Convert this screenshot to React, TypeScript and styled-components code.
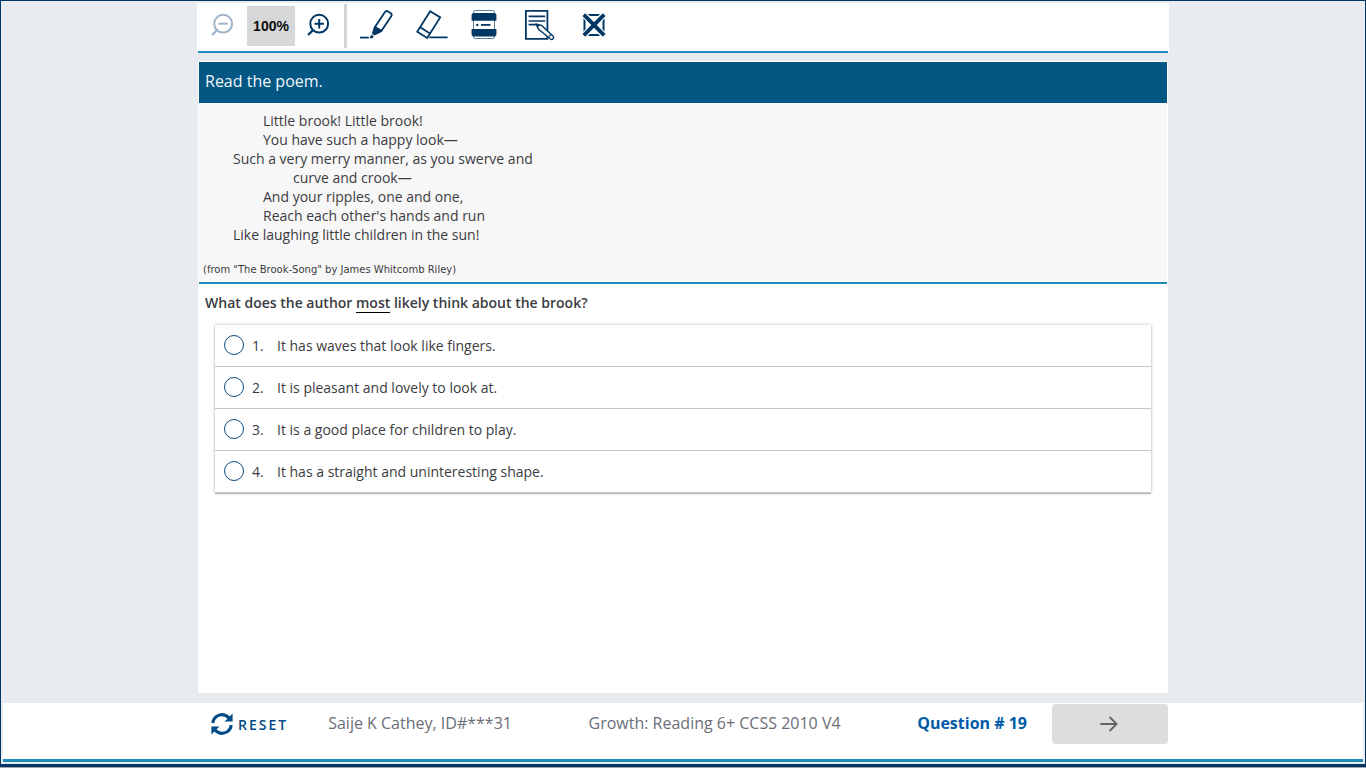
import React, { useState } from "react";
import styled, { createGlobalStyle } from "styled-components";

const navy = "#003764";
const teal = "#218bba";
const ink = "#3b3c41";
const mist = "#e8ebf0";

const GlobalStyle = createGlobalStyle`
  *, *::before, *::after { box-sizing: border-box; }
  body { margin: 0; background: #a4a8ae; }
`;

const Frame = styled.div`
  display: flex;
  flex-direction: column;
  min-height: calc(100vh - 1px);
  padding: 2px;
  border: 1px solid ${navy};
  border-bottom-width: 3px;
  background: ${mist};
  color: ${ink};
  font-family: "Open Sans", "Noto Sans", sans-serif;
  font-size: 14px;
  line-height: 19px;
`;

const Toolbar = styled.header`
  display: flex;
  flex-direction: column;
  width: 100%;
  max-width: 972px;
  margin: 0 auto;
  background: #fff;
`;

const Tools = styled.div`
  display: flex;
  align-items: center;
  height: 48px;
  padding: 0 14px 2px;
`;

const ToolbarRule = styled.div`
  height: 2px;
  margin: 0 1px;
  background: ${teal};
`;

const ToolButton = styled.button<{ $gap?: number }>`
  display: flex;
  padding: 0;
  margin: 0 0 2px ${(p) => p.$gap ?? 0}px;
  border: 0;
  background: none;
  color: ${navy};
  cursor: pointer;

  &:disabled {
    color: #9fb3c6;
    cursor: default;
  }
`;

const ZoomLevel = styled.output`
  width: 48px;
  margin: 0 12px;
  background: #d6d7d9;
  color: #0b0b0b;
  font: bold 14px/40px "Liberation Sans", Arial, sans-serif;
  text-align: center;
`;

const Divider = styled.span`
  width: 3px;
  height: 44px;
  margin-left: 13px;
  background: #d3d4d6;
`;

const Sheet = styled.main`
  flex: 1;
  width: 100%;
  max-width: 970px;
  margin: 8px auto 10px;
  padding: 1px;
  background: #fff;
`;

const Direction = styled.h1`
  margin: 0;
  padding: 8px 6px 11px;
  background: #025783;
  color: #f1f6f9;
  font-size: 16px;
  font-weight: 400;
  line-height: 22px;
`;

const Passage = styled.section`
  padding: 8px 4px 4px;
  border-bottom: 2px solid ${teal};
  background: #f7f7f7;
`;

const Poem = styled.div`
  margin-left: 30px;
`;

const Verse = styled.p<{ $indent: number }>`
  margin: 0;
  padding-left: ${(p) => p.$indent * 30}px;
`;

const Source = styled.p`
  margin: 18px 0 0;
  font-family: "DejaVu Sans", Verdana, sans-serif;
  font-size: 10px;
  line-height: 16px;
`;

const Question = styled.fieldset`
  margin: 0;
  padding: 0;
  border: 0;
`;

const Prompt = styled.legend`
  padding: 9px 6px 12px;
  font-weight: 600;
`;

const Key = styled.span`
  border-bottom: 1px solid #000;
`;

const Answers = styled.ol`
  margin: 1px 16px 0;
  padding: 0;
  list-style: none;
  box-shadow: 0 0 3px rgba(0, 0, 0, 0.3), 0 1px 1px rgba(0, 0, 0, 0.18);
`;

const Answer = styled.li`
  border-bottom: 1px solid #c6c6c8;
`;

const Choice = styled.label`
  display: flex;
  align-items: center;
  height: 41px;
  padding: 0 9px;
  cursor: pointer;
`;

const Radio = styled.input`
  appearance: none;
  width: 20px;
  height: 20px;
  margin: 0 8px 2px 0;
  border: 1px solid #11487c;
  border-radius: 50%;
  background: #fff;

  &:checked {
    background: #11487c;
    box-shadow: inset 0 0 0 4px #fff;
  }
`;

const Ordinal = styled.span`
  width: 25px;
`;

const Footer = styled.footer`
  border-bottom: 3px solid ${teal};
  background: #fff;
  color: #6b6e77;
  font-size: 16px;
  line-height: 22px;
`;

const FooterRow = styled.div`
  display: flex;
  justify-content: space-between;
  width: 100%;
  max-width: 970px;
  height: 56px;
  margin: 0 auto;
  padding: 1px 0 0 13px;
  line-height: 38px;
`;

const Student = styled.div`
  display: flex;
  gap: 40px;
`;

const ResetButton = styled.button`
  display: flex;
  align-items: center;
  gap: 5px;
  height: 40px;
  padding: 0;
  border: 0;
  background: none;
  color: #004b87;
  font: 600 14px/19px "Open Sans", "Noto Sans", sans-serif;
  letter-spacing: 2px;
  cursor: pointer;
`;

const Counter = styled.strong`
  color: #005ba8;
  font-weight: 700;
`;

const Progress = styled.div`
  display: flex;
  gap: 25px;
`;

const NextButton = styled.button`
  display: flex;
  align-items: center;
  justify-content: center;
  width: 116px;
  height: 40px;
  padding: 0 2px 0 0;
  border: 0;
  border-radius: 4px;
  background: #dddddf;
  color: #626262;
`;

const ZoomIcon = ({ plus }: { plus?: boolean }) => (
  <svg width="24" height="26" viewBox="0 0 24 26" fill="none" stroke="currentColor" strokeWidth="2" aria-hidden="true">
    <circle cx="12.2" cy="11.7" r="8.9" />
    <path d="M6.1 18 1.1 23" strokeWidth="2.4" />
    <path d={plus ? "M7.5 11.7h9.4M12.2 7v9.4" : "M7.5 11.7h9.4"} />
  </svg>
);

const HighlighterIcon = () => (
  <svg width="34" height="32" viewBox="0 0 34 32" fill="none" stroke="currentColor" aria-hidden="true">
    <path d="M15 18 24.8 3.2Q26 1.2 28 2.4L30.8 4.2Q32.4 5.4 31.2 7.2L21.5 21.8Z" strokeWidth="1.8" />
    <path d="M14.2 17.2 22.2 22.4 20.2 23.8 14.4 26.4 11.9 24.8 13.4 19.5Z" fill="currentColor" stroke="none" />
    <path d="M11.4 25.7 13.8 27.3 12.6 29.3H9.4Z" fill="currentColor" stroke="none" />
    <path d="M0 28.6H8.8" strokeWidth="1.8" />
  </svg>
);

const EraserIcon = () => (
  <svg width="32" height="32" viewBox="0 0 32 32" fill="none" stroke="currentColor" strokeWidth="1.8" aria-hidden="true">
    <path d="M14.2 2.2 24.2 8.4 11.2 29 1.2 22.8Z" />
    <path d="M4.2 18.2 14 24.4M13.4 28.4H31.6" />
  </svg>
);

const LineReaderIcon = () => (
  <svg width="26" height="32" viewBox="0 0 26 32" fill="none" stroke="currentColor" aria-hidden="true">
    <rect x="2.5" y="1.5" width="21" height="28" rx="2" strokeWidth="1" opacity=".65" />
    <path d="M2 4H24L25.4 5.4V11.8H.6V5.4ZM.6 20H25.4V26L24 27.6H2L.6 26Z" fill="currentColor" stroke="none" />
    <circle cx="6.3" cy="15.9" r="1.2" fill="currentColor" stroke="none" />
    <path d="M10 15.9H19.4" strokeWidth="1.8" />
  </svg>
);

const NotepadIcon = () => (
  <svg width="32" height="32" viewBox="0 0 32 32" fill="none" stroke="currentColor" strokeWidth="1.8" aria-hidden="true">
    <path d="M1.9 1.9H23.4V29.8H1.9Z" />
    <path d="M4.6 7.4H21.2M4.6 12H21.2M4.6 15.6H12" strokeWidth="1.6" />
    <path d="M12.4 15.2 17.6 16.4 29.2 27.2Q30.2 28.6 29 29.8 27.8 31 26.4 30L14.4 20Z" fill="#fff" strokeWidth="1.4" />
    <path d="M12.4 15.2 15.4 15.9 13.4 18.2Z" fill="currentColor" strokeWidth="1" />
    <path d="M24.6 27.8 27.2 25.2" strokeWidth="1.1" />
  </svg>
);

const EliminatorIcon = () => (
  <svg width="24" height="24" viewBox="0 0 24 24" fill="none" stroke="currentColor" aria-hidden="true">
    <rect x="2.5" y="2" width="19" height="20" rx="1" strokeWidth="2" />
    <path d="M1.5 1 22.5 23M22.5 1 1.5 23" stroke="#fff" strokeWidth="6.4" />
    <path d="M1.8 1.6 22.2 22.4M22.2 1.6 1.8 22.4" strokeWidth="3.8" />
  </svg>
);

const ResetIcon = () => (
  <svg width="22" height="22" viewBox="0 0 22 22" fill="none" stroke="currentColor" strokeWidth="3" aria-hidden="true">
    <path d="M1.8 10Q2.2 5.6 5.8 3.2 12.4-.6 18 4.8M20.2 12Q19.8 16.4 16.2 18.8 9.6 22.6 4 17.2" />
    <path d="M21.6.4V8.4H13.6ZM.4 21.6V13.6H8.4Z" fill="currentColor" stroke="none" />
  </svg>
);

const ArrowIcon = () => (
  <svg width="18" height="16" viewBox="0 0 18 16" fill="none" stroke="currentColor" strokeWidth="1.8" aria-hidden="true">
    <path d="M.4 8H16.6M9.6 1 16.6 8 9.6 15" />
  </svg>
);

const verses: [number, string][] = [
  [1, "Little brook! Little brook!"],
  [1, "You have such a happy look—"],
  [0, "Such a very merry manner, as you swerve and"],
  [2, "curve and crook—"],
  [1, "And your ripples, one and one,"],
  [1, "Reach each other's hands and run"],
  [0, "Like laughing little children in the sun!"],
];

const answers = [
  "It has waves that look like fingers.",
  "It is pleasant and lovely to look at.",
  "It is a good place for children to play.",
  "It has a straight and uninteresting shape.",
];

export default function App() {
  const [picked, setPicked] = useState<number | null>(null);

  return (
    <>
      <GlobalStyle />
      <Frame>
        <Toolbar>
          <Tools>
            <ToolButton aria-label="Zoom out" disabled><ZoomIcon /></ToolButton>
            <ZoomLevel>100%</ZoomLevel>
            <ToolButton aria-label="Zoom in"><ZoomIcon plus /></ToolButton>
            <Divider />
            <ToolButton $gap={13} aria-label="Highlighter"><HighlighterIcon /></ToolButton>
            <ToolButton $gap={22} aria-label="Eraser"><EraserIcon /></ToolButton>
            <ToolButton $gap={23} aria-label="Line reader"><LineReaderIcon /></ToolButton>
            <ToolButton $gap={27} aria-label="Notepad"><NotepadIcon /></ToolButton>
            <ToolButton $gap={26} aria-label="Answer eliminator"><EliminatorIcon /></ToolButton>
          </Tools>
          <ToolbarRule />
        </Toolbar>

        <Sheet>
          <Direction>Read the poem.</Direction>
          <Passage>
            <Poem>
              {verses.map(([indent, line]) => (
                <Verse key={line} $indent={indent}>{line}</Verse>
              ))}
            </Poem>
            <Source>(from "The Brook-Song" by James Whitcomb Riley)</Source>
          </Passage>
          <Question>
            <Prompt>
              What does the author <Key>most</Key> likely think about the brook?
            </Prompt>
            <Answers>
              {answers.map((text, i) => (
                <Answer key={text}>
                  <Choice>
                    <Radio type="radio" name="answer" checked={picked === i} onChange={() => setPicked(i)} />
                    <Ordinal>{i + 1}.</Ordinal>
                    <span>{text}</span>
                  </Choice>
                </Answer>
              ))}
            </Answers>
          </Question>
        </Sheet>

        <Footer>
          <FooterRow>
            <Student>
              <ResetButton><ResetIcon />RESET</ResetButton>
              <span>Saije K Cathey, ID#***31</span>
            </Student>
            <span>Growth: Reading 6+ CCSS 2010 V4</span>
            <Progress>
              <Counter>Question # 19</Counter>
              <NextButton aria-label="Next question"><ArrowIcon /></NextButton>
            </Progress>
          </FooterRow>
        </Footer>
      </Frame>
    </>
  );
}
